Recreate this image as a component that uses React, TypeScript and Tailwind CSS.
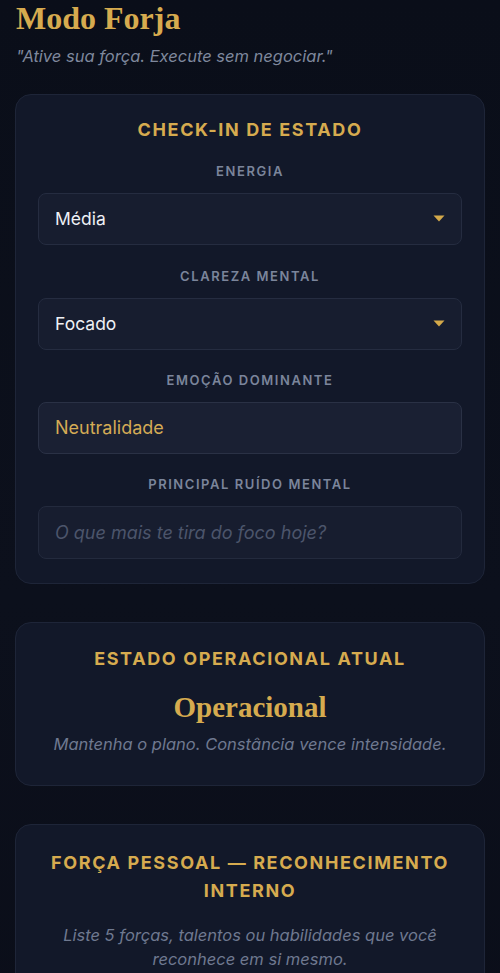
const sans = { fontFamily: 'Inter, "Noto Sans", sans-serif' };
const serif = { fontFamily: '"Liberation Serif", "DejaVu Serif", serif' };

function Label({ children }: { children: React.ReactNode }) {
  return (
    <p className="text-center text-[13px] leading-[18px] font-semibold tracking-[0.12em] text-[#7b859b] mb-[13px]">
      {children}
    </p>
  );
}

function Caret() {
  return (
    <svg width="12" height="7" viewBox="0 0 12 7" className="shrink-0">
      <path d="M0.5 0.5 H11.5 L6 6.5 Z" fill="#d4a94a" />
    </svg>
  );
}

function SelectBox({ value }: { value: string }) {
  return (
    <div className="h-[52px] rounded-lg bg-[#171d2f] border border-[#252c40] flex items-center justify-between pl-4 pr-4">
      <span className="text-[17.5px] text-[#eef0f5]">{value}</span>
      <Caret />
    </div>
  );
}

export default function App() {
  return (
    <div className="min-h-screen bg-gradient-to-b from-[#0a0e19] via-[#0c101c] to-[#0a0d18] px-[15px] pb-10" style={sans}>
      {/* Header */}
      <h1 className="text-[32px] leading-[36px] font-bold text-[#d6ab4f] pl-[1px]" style={serif}>
        Modo Forja
      </h1>
      <p className="mt-[8px] text-[16.5px] italic text-[#7f889d] pl-[1px]">"Ative sua força. Execute sem negociar."</p>

      {/* Check-in */}
      <section className="mt-[25px] rounded-2xl bg-[#121829] border border-[#1e2538] px-[22px] pt-[23px] pb-[24px]">
        <h2 className="text-center text-[18px] leading-6 font-bold tracking-[0.09em] text-[#d6ab4f] mb-[20px]">
          CHECK-IN DE ESTADO
        </h2>

        <Label>ENERGIA</Label>
        <SelectBox value="Média" />

        <div className="mt-[22px]">
          <Label>CLAREZA MENTAL</Label>
          <SelectBox value="Focado" />
        </div>

        <div className="mt-[21px]">
          <Label>EMOÇÃO DOMINANTE</Label>
          <div className="h-[52px] rounded-lg bg-[#1a2033] border border-[#2a3145] flex items-center pl-4">
            <span className="text-[18px] text-[#d4ab55]">Neutralidade</span>
          </div>
        </div>

        <div className="mt-[21px]">
          <Label>PRINCIPAL RUÍDO MENTAL</Label>
          <div className="h-[53px] rounded-lg bg-[#171d2f] border border-[#232a3d] flex items-center pl-4">
            <span className="text-[18px] italic text-[#4c556b]">O que mais te tira do foco hoje?</span>
          </div>
        </div>
      </section>

      {/* Estado operacional */}
      <section className="mt-[38px] rounded-2xl bg-[#121829] border border-[#1e2538] px-[22px] pt-[24px] pb-[28px] text-center">
        <h2 className="text-[18px] leading-6 font-bold tracking-[0.09em] text-[#d6ab4f]">ESTADO OPERACIONAL ATUAL</h2>
        <p className="mt-[19px] text-[29px] leading-[34px] font-bold text-[#d6ab4f]" style={serif}>
          Operacional
        </p>
        <p className="mt-[8px] text-[16.5px] italic text-[#6f7990]">Mantenha o plano. Constância vence intensidade.</p>
      </section>

      {/* Força pessoal */}
      <section className="mt-[38px] rounded-2xl bg-[#121829] border border-[#1e2538] px-[22px] pt-[24px] pb-[26px] text-center">
        <h2 className="text-[18px] leading-[28px] font-bold tracking-[0.09em] text-[#d6ab4f]">
          FORÇA PESSOAL — RECONHECIMENTO INTERNO
        </h2>
        <p className="mt-[18px] text-[16.5px] leading-6 italic text-[#6f7990] px-6">
          Liste 5 forças, talentos ou habilidades que você reconhece em si mesmo.
        </p>
        <div className="h-40" />
      </section>
    </div>
  );
}
